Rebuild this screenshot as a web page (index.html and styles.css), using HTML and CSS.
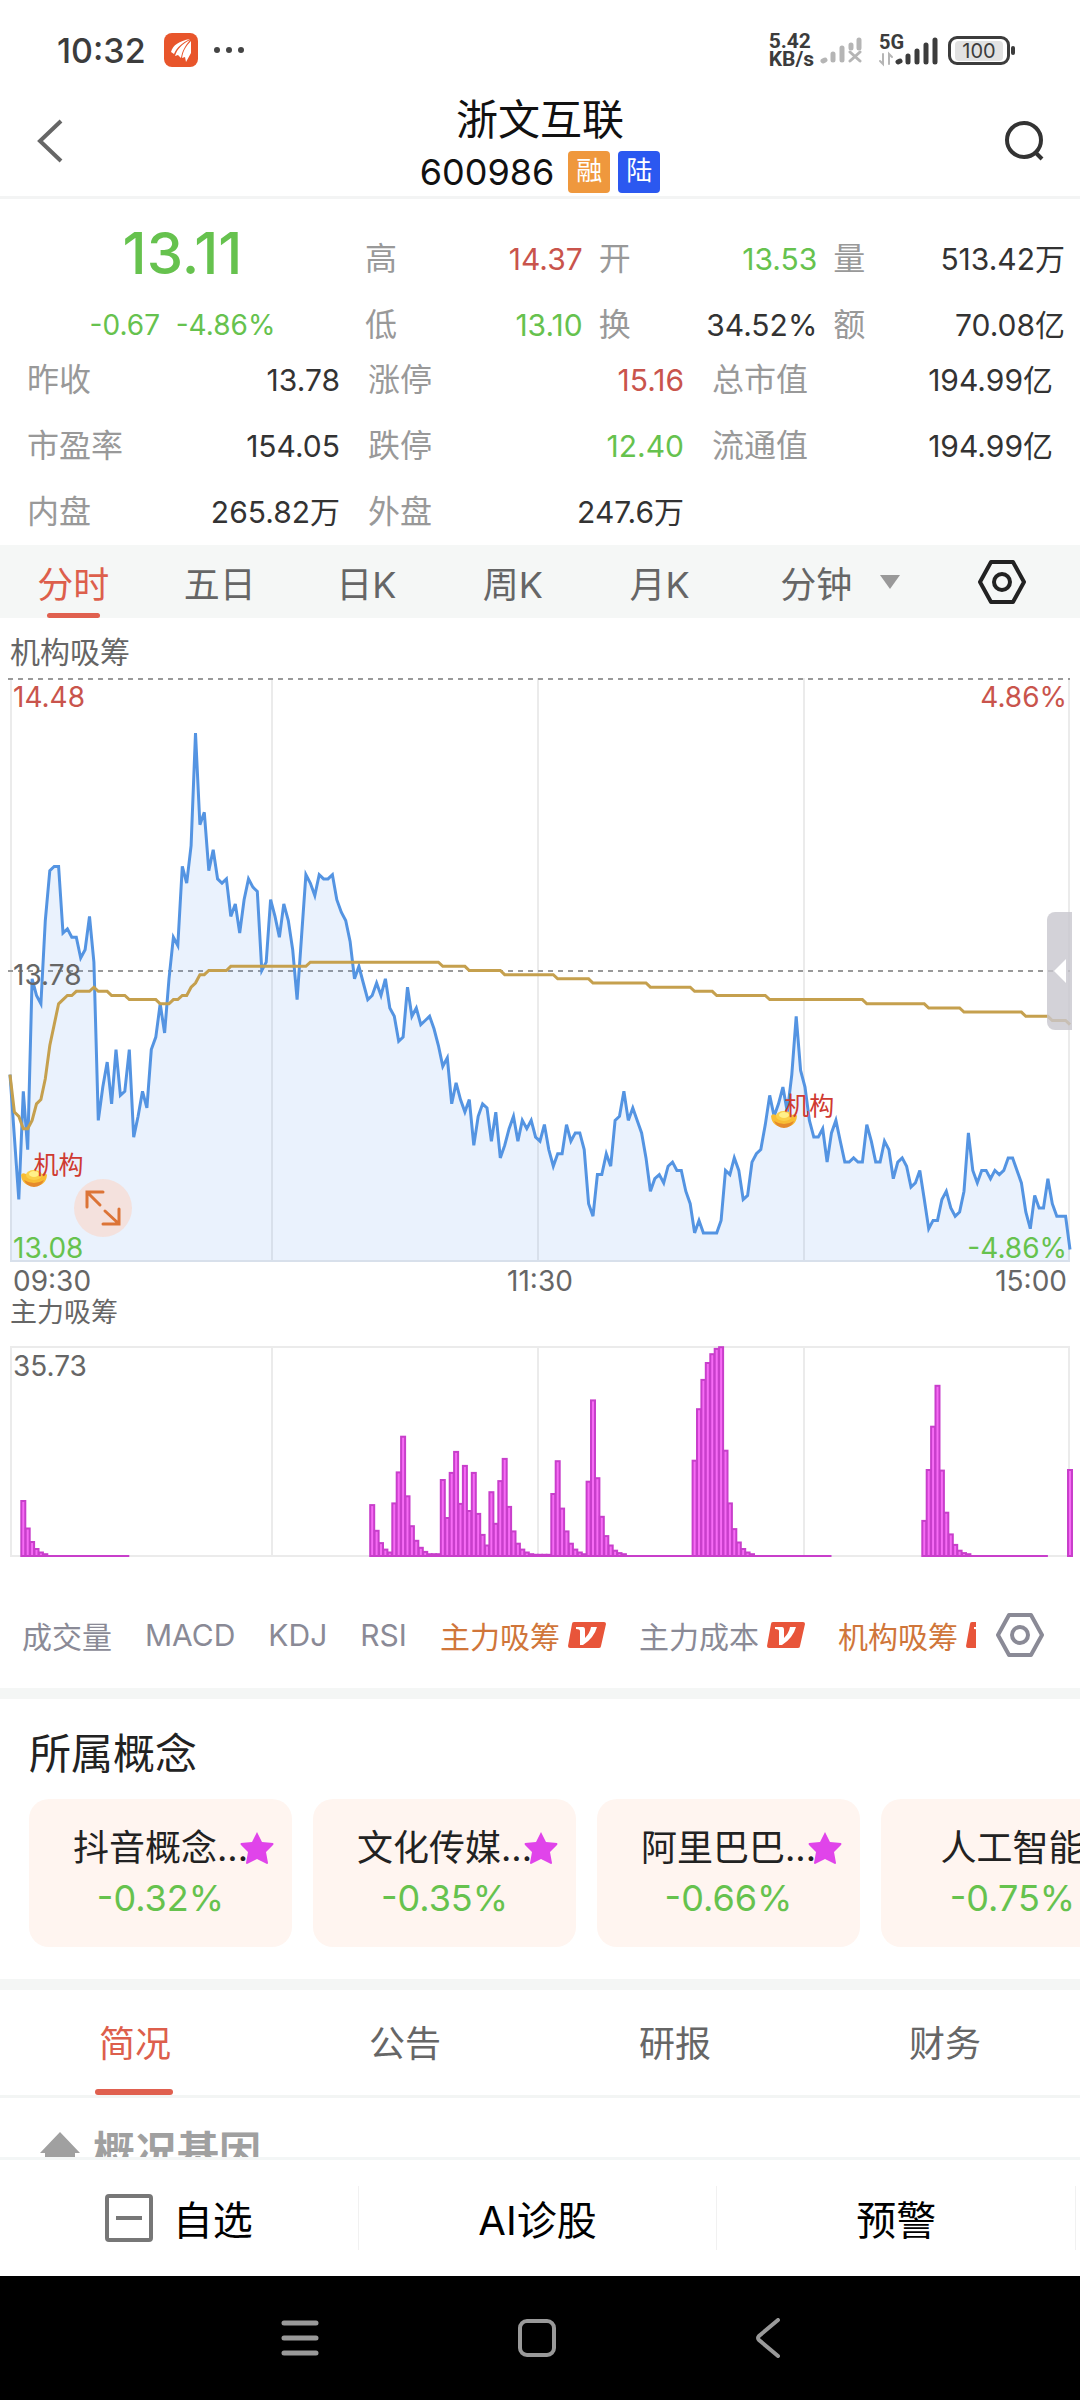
FILE: index.html
```html
<!DOCTYPE html>
<html lang="zh-CN">
<head>
    <meta charset="UTF-8">
    <meta name="viewport" content="width=device-width, initial-scale=1.0">
    <title>浙文互联 600986</title>
    <link rel="stylesheet" href="styles.css">
</head>
<body>
<div class="app">
    <!-- phone status bar -->
    <div class="status">
        <span class="clock">10:32</span>
        <svg class="app-icon" width="34" height="34" viewBox="0 0 34 34">
            <rect width="34" height="34" rx="8" fill="#e8552b"/>
            <path d="M7 19 C9 12 15 8 26 6 C18 10 13 14 10 21 Z M11 23 C13 16 18 11 26 7 C21 13 18 18 17 25 L14 22 Z M18 25 C19 18 22 13 27 8 L27 20 L22 29 L21 24 Z" fill="#fff"/>
        </svg>
        <svg class="dots" width="32" height="8" viewBox="0 0 32 8" fill="#444"><circle cx="4" cy="4" r="3"/><circle cx="16" cy="4" r="3"/><circle cx="28" cy="4" r="3"/></svg>
        <span class="spacer"></span>
        <span class="speed"><span>5.42</span><span>KB/s</span></span>
        <svg class="sim1" width="42" height="28" viewBox="0 0 42 28" stroke="#b5b5b5" stroke-width="5" stroke-linecap="round" fill="none">
            <path d="M3 25 L5 24 M13 24 V18 M22 24 V12 M31 12 V9 M39 12 V4"/>
            <path d="M30 16 L40 25 M40 16 L30 25" stroke-width="3"/>
        </svg>
        <div class="sim2">
            <span class="net">5G</span>
            <svg width="60" height="34" viewBox="0 0 60 34" stroke="#3c3c3c" stroke-width="5" stroke-linecap="round" fill="none">
                <path d="M20 29 L22 28 M30 29 V23 M39 29 V18 M48 29 V12 M57 29 V7"/>
                <path d="M5 21 V31 L2 28 M11 31 V21 L14 24" stroke="#b5b5b5" stroke-width="2"/>
            </svg>
        </div>
        <span class="battery"><span>100</span></span>
    </div>

    <header class="header">
        <button class="icon-btn" aria-label="返回"><svg width="30" height="46" viewBox="0 0 30 46"><path d="M27 3 L6 23 L27 43" fill="none" stroke="#666" stroke-width="4"/></svg></button>
        <div class="title">
            <h1>浙文互联</h1>
            <div class="code">600986 <span class="tag rong">融</span><span class="tag lu">陆</span></div>
        </div>
        <button class="icon-btn" aria-label="搜索"><svg width="42" height="42" viewBox="0 0 42 42" fill="none" stroke="#333" stroke-width="4"><circle cx="20" cy="20" r="17"/><path d="M31 32 L38 39"/></svg></button>
    </header>

    <section class="quote">
        <div class="quote-top">
            <div class="price">
                <strong>13.11</strong>
                <span>-0.67&nbsp; -4.86%</span>
            </div>
            <dl class="cells">
                <div><dt>高</dt><dd class="up">14.37</dd></div>
                <div><dt>开</dt><dd class="down">13.53</dd></div>
                <div><dt>量</dt><dd>513.42万</dd></div>
                <div><dt>低</dt><dd class="down">13.10</dd></div>
                <div><dt>换</dt><dd>34.52%</dd></div>
                <div><dt>额</dt><dd>70.08亿</dd></div>
            </dl>
        </div>
        <dl class="cells wide">
            <div><dt>昨收</dt><dd>13.78</dd></div>
            <div><dt>涨停</dt><dd class="up">15.16</dd></div>
            <div><dt>总市值</dt><dd>194.99亿</dd></div>
            <div><dt>市盈率</dt><dd>154.05</dd></div>
            <div><dt>跌停</dt><dd class="down">12.40</dd></div>
            <div><dt>流通值</dt><dd>194.99亿</dd></div>
            <div><dt>内盘</dt><dd>265.82万</dd></div>
            <div><dt>外盘</dt><dd>247.6万</dd></div>
        </dl>
    </section>

    <nav class="periods">
        <button class="active">分时</button>
        <button>五日</button>
        <button>日K</button>
        <button>周K</button>
        <button>月K</button>
        <button class="minutes">分钟 <i class="caret"></i></button>
        <button class="setting" aria-label="设置"><svg width="48" height="46" viewBox="0 0 48 46" fill="none" stroke="#222" stroke-width="4"><path d="M13 3 H35 L46 23 L35 43 H13 L2 23 Z" stroke-linejoin="round"/><circle cx="24" cy="23" r="8"/></svg></button>
    </nav>

    <section class="charts">
        <h2>机构吸筹</h2>
        <div class="plot">
            <svg id="priceChart" viewBox="0 0 1060 584" preserveAspectRatio="none"></svg>
            <span class="label top-left up">14.48</span>
            <span class="label top-right up">4.86%</span>
            <span class="label middle">13.78</span>
            <span class="label bottom-left down">13.08</span>
            <span class="label bottom-right down">-4.86%</span>
            <div class="marker first"><svg width="26" height="18" viewBox="0 0 26 18"><path d="M0 6 Q1 3 5 5 Q13 8 21 5 Q25 3 26 6 Q25 17 13 17 Q1 17 0 6 Z" fill="#f8bd35"/><path d="M3 11 Q13 17 23 11 Q20 18 13 18 Q6 18 3 11 Z" fill="#e58a2c"/><ellipse cx="13" cy="6" rx="8" ry="5" fill="#fbd04a"/><ellipse cx="13" cy="5" rx="5" ry="3" fill="#fff08a"/></svg><span>机构</span></div>
            <div class="marker second"><svg width="26" height="18" viewBox="0 0 26 18"><path d="M0 6 Q1 3 5 5 Q13 8 21 5 Q25 3 26 6 Q25 17 13 17 Q1 17 0 6 Z" fill="#f8bd35"/><path d="M3 11 Q13 17 23 11 Q20 18 13 18 Q6 18 3 11 Z" fill="#e58a2c"/><ellipse cx="13" cy="6" rx="8" ry="5" fill="#fbd04a"/><ellipse cx="13" cy="5" rx="5" ry="3" fill="#fff08a"/></svg><span>机构</span></div>
            <button class="expand" aria-label="全屏"><svg width="36" height="36" viewBox="0 0 36 36" fill="none" stroke="#dc7437" stroke-width="3" stroke-linecap="round"><path d="M2 17 V2 H18 M3 3 L15 15 M34 19 V34 H18 M33 33 L20 21"/></svg></button>
            <button class="drawer" aria-label="展开"><svg width="12" height="24" viewBox="0 0 12 24"><path d="M12 0 V24 L0 12 Z" fill="#fff"/></svg></button>
        </div>
        <div class="times"><span>09:30</span><span>11:30</span><span>15:00</span></div>
        <h3>主力吸筹</h3>
        <div class="plot sub">
            <svg id="forceChart" viewBox="0 0 1060 210" preserveAspectRatio="none"></svg>
            <span class="label top-left">35.73</span>
        </div>
    </section>

    <div class="indicators">
        <div class="scroll">
            <button>成交量</button>
            <button>MACD</button>
            <button>KDJ</button>
            <button>RSI</button>
            <button class="on">主力吸筹<svg class="vip" width="38" height="26" viewBox="0 0 38 26"><path d="M6 0 H36 Q38 0 38 2 L33 24 Q33 26 31 26 H2 Q0 26 0 24 L4 2 Q4 0 6 0 Z" fill="#e8553a"/><path d="M8 5 H15 Q17 5 17 8 L17 16 Q22 11 23 5 H29 Q26 16 15 23 H12 L12 9 Q12 7 8 7 Z" fill="#fff"/></svg></button>
            <button>主力成本<svg class="vip" width="38" height="26" viewBox="0 0 38 26"><path d="M6 0 H36 Q38 0 38 2 L33 24 Q33 26 31 26 H2 Q0 26 0 24 L4 2 Q4 0 6 0 Z" fill="#e8553a"/><path d="M8 5 H15 Q17 5 17 8 L17 16 Q22 11 23 5 H29 Q26 16 15 23 H12 L12 9 Q12 7 8 7 Z" fill="#fff"/></svg></button>
            <button class="on">机构吸筹<svg class="vip" width="38" height="26" viewBox="0 0 38 26"><path d="M6 0 H36 Q38 0 38 2 L33 24 Q33 26 31 26 H2 Q0 26 0 24 L4 2 Q4 0 6 0 Z" fill="#e8553a"/><path d="M8 5 H15 Q17 5 17 8 L17 16 Q22 11 23 5 H29 Q26 16 15 23 H12 L12 9 Q12 7 8 7 Z" fill="#fff"/></svg></button>
        </div>
        <button class="setting" aria-label="指标设置"><svg width="48" height="46" viewBox="0 0 48 46" fill="none" stroke="#8a8a96" stroke-width="4"><path d="M13 3 H35 L46 23 L35 43 H13 L2 23 Z" stroke-linejoin="round"/><circle cx="24" cy="23" r="8"/></svg></button>
    </div>

    <section class="concepts">
        <h2>所属概念</h2>
        <div class="cards">
            <a class="card" href="#"><span class="name">抖音概念...</span><span class="rate">-0.32%</span><svg class="star" viewBox="0 0 34 32"><path d="M17 0 L22 10 L33 11 Q34 12 33 13 L26 20 L28 31 Q28 32 27 32 L17 27 L7 32 Q6 32 6 31 L8 20 L1 13 Q0 12 1 11 L12 10 Z"/></svg></a>
            <a class="card" href="#"><span class="name">文化传媒...</span><span class="rate">-0.35%</span><svg class="star" viewBox="0 0 34 32"><path d="M17 0 L22 10 L33 11 Q34 12 33 13 L26 20 L28 31 Q28 32 27 32 L17 27 L7 32 Q6 32 6 31 L8 20 L1 13 Q0 12 1 11 L12 10 Z"/></svg></a>
            <a class="card" href="#"><span class="name">阿里巴巴...</span><span class="rate">-0.66%</span><svg class="star" viewBox="0 0 34 32"><path d="M17 0 L22 10 L33 11 Q34 12 33 13 L26 20 L28 31 Q28 32 27 32 L17 27 L7 32 Q6 32 6 31 L8 20 L1 13 Q0 12 1 11 L12 10 Z"/></svg></a>
            <a class="card" href="#"><span class="name">人工智能</span><span class="rate">-0.75%</span></a>
        </div>
    </section>

    <nav class="tabs">
        <button class="active">简况</button>
        <button>公告</button>
        <button>研报</button>
        <button>财务</button>
    </nav>

    <section class="profile">
        <h2><svg width="40" height="40" viewBox="0 0 40 40" fill="#a0a0a0"><path d="M20 0 L40 21 H35 V38 H25 V25 H15 V38 H5 V21 H0 Z"/></svg>概况基因</h2>
    </section>

    <div class="actions">
        <button><svg width="48" height="48" viewBox="0 0 48 48" fill="none" stroke="#777" stroke-width="4"><rect x="2" y="2" width="44" height="44" rx="2"/><path d="M11 24 H37"/></svg>自选</button>
        <button>AI诊股</button>
        <button>预警</button>
    </div>

    <div class="system-nav">
        <button aria-label="菜单"><svg width="38" height="38" viewBox="0 0 38 38" stroke="#999" stroke-width="5" stroke-linecap="round"><path d="M3 4 H35 M3 19 H35 M3 34 H35"/></svg></button>
        <button aria-label="主页"><svg width="40" height="40" viewBox="0 0 40 40" fill="none" stroke="#999" stroke-width="4"><rect x="3" y="3" width="34" height="34" rx="7"/></svg></button>
        <button aria-label="返回"><svg width="26" height="40" viewBox="0 0 26 40" fill="none" stroke="#999" stroke-width="4" stroke-linecap="round"><path d="M23 2 L4 18 Q2 20 4 22 L23 38"/></svg></button>
    </div>
</div>
<script src="chart.js"></script>
</body>
</html>
```
FILE: styles.css
```css
* { box-sizing: border-box; }
body { margin: 0; background: #fff; color: #333; font-family: Inter, "Noto Sans CJK SC", sans-serif; }
button { border: 0; padding: 0; background: none; color: inherit; font: inherit; cursor: pointer; }
h1, h2, h3, dl, dd { margin: 0; font-weight: 400; }
a { color: inherit; text-decoration: none; }
svg { display: block; flex: none; }

.app { height: 100vh; display: flex; flex-direction: column; overflow: hidden; }
.app > * { flex: none; }
.up { color: #c9544c; }
.down { color: #66c24e; }

/* status bar */
.status { display: flex; align-items: center; height: 100px; padding: 0 70px 0 57px; color: #3c3c3c; }
.clock { font-size: 34px; font-weight: 500; }
.app-icon { margin-left: 18px; }
.dots { margin-left: 15px; }
.spacer { flex: 1; }
.speed { display: grid; font-family: Roboto, sans-serif; font-size: 21px; line-height: 18px; font-weight: 700; }
.sim1 { margin-left: 6px; }
.sim2 { position: relative; margin-left: 16px; }
.net { position: absolute; left: 1px; top: -1px; font-family: Roboto, sans-serif; font-size: 20px; line-height: 20px; font-weight: 700; }
.battery { position: relative; margin-left: 10px; width: 62px; height: 29px; padding: 2px; border: 3px solid #3c3c3c; border-radius: 9px; font-size: 20px; line-height: 20px; text-align: center; }
.battery span { display: block; margin: 0 2px; background: #e2e2e2; border-radius: 4px; }
.battery::after { content: ""; position: absolute; right: -8px; top: 7px; width: 4px; height: 9px; background: #3c3c3c; border-radius: 2px; }

/* header */
.header { display: flex; justify-content: space-between; align-items: center; height: 99px; padding: 0 34px; border-bottom: 3px solid #f3f4f4; color: #111; }
.icon-btn { width: 42px; padding-bottom: 14px; }
.title { text-align: center; padding-bottom: 8px; }
.title h1 { font-size: 42px; line-height: 50px; margin-bottom: 5px; }
.code { display: flex; align-items: center; justify-content: center; font-size: 36px; line-height: 44px; }
.tag { margin-left: 8px; width: 42px; height: 42px; border-radius: 4px; color: #fff; font-size: 26px; line-height: 40px; }
.tag.rong { background: #ef983d; margin-left: 14px; }
.tag.lu { background: #2b58f0; }

/* quote */
.quote { padding: 33px 0 6px; font-size: 32px; line-height: 54px; }
.quote-top { display: grid; grid-template-columns: 365px 1fr; padding-right: 15px; }
.price { display: flex; flex-direction: column; align-items: center; color: #66c24e; }
.price strong { font-size: 58px; font-weight: 500; line-height: 42px; }
.price span { font-size: 28px; margin-top: 24px; }
.cells { display: grid; grid-template-columns: 218fr 219fr 232fr; column-gap: 16px; row-gap: 12px; }
.cells div { display: flex; justify-content: space-between; height: 54px; }
.cells dt { color: #999; }
.cells dd { font-size: 30px; }
.cells.wide { grid-template-columns: 313fr 316fr 341fr; column-gap: 28px; padding: 0 27px; margin-top: 1px; }

/* period tabs */
.periods { display: flex; height: 73px; padding-right: 24px; background: #f5f7f6; color: #666; font-size: 36px; }
.periods button { position: relative; flex: 146; }
.periods .active, .tabs .active { color: #dd5f4c; }
.periods .active::after { content: ""; position: absolute; left: 32%; right: 32%; bottom: 0; height: 5px; border-radius: 3px; background: #e0604f; }
.periods .minutes { flex: 214; display: flex; align-items: center; justify-content: center; gap: 28px; }
.periods .setting { flex: 108; display: flex; align-items: center; justify-content: center; }
.caret { border: 10px solid transparent; border-top: 14px solid #999; border-bottom: 0; }

/* charts */
.charts { padding: 8px 10px 0; color: #666; font-size: 28px; }
.charts h2 { font-size: 30px; line-height: 52px; }
.charts h3 { font-size: 27px; line-height: 26px; }
.plot { position: relative; height: 584px; }
.plot svg[id] { width: 100%; height: 100%; overflow: visible; }
.plot.sub { height: 210px; margin-top: 21px; }
.label { position: absolute; line-height: 36px; }
.top-left { left: 3px; top: 1px; }
.top-right { right: 3px; top: 1px; }
.middle { left: 3px; top: 279px; }
.bottom-left { left: 3px; bottom: -4px; }
.bottom-right { right: 3px; bottom: -4px; }
.times { display: grid; grid-template-columns: 1fr 1fr 1fr; padding: 0 3px; line-height: 38px; text-align: center; }
.times span:first-child { text-align: left; }
.times span:last-child { text-align: right; }
.marker { position: absolute; width: 26px; }
.marker span { position: absolute; left: 13px; bottom: 4px; white-space: nowrap; font-size: 25px; line-height: 36px; color: #cf3a31; }
.marker.first { left: 1%; top: 84%; }
.marker.second { left: 72%; top: 74%; margin-left: -2px; }
.expand { position: absolute; left: 6%; bottom: 25px; width: 58px; height: 58px; border-radius: 50%; background: rgba(250, 214, 200, .6); display: flex; align-items: center; justify-content: center; }
.drawer { position: absolute; right: -2px; top: 40%; width: 25px; height: 118px; border-radius: 8px 0 0 8px; background: rgba(200, 199, 206, .8); display: flex; align-items: center; justify-content: center; }

.grid { stroke: #ebebeb; stroke-width: 2; fill: none; }
.dash { stroke: #999; stroke-width: 2; stroke-dasharray: 5 5; }
.area { fill: rgba(86, 152, 240, .12); }
.line { fill: none; stroke: #5494e2; stroke-width: 3; }
.avg { fill: none; stroke: #c5a04e; stroke-width: 3; }
.bar { fill: #f76bf5; stroke: #c83fcb; stroke-width: 2; }

/* indicator switcher */
.indicators { display: flex; align-items: center; justify-content: space-between; height: 131px; padding: 24px 36px 0 22px; color: #8a8a96; font-size: 30px; }
.scroll { display: flex; gap: 33px; width: 954px; overflow: hidden; }
.scroll button { display: flex; align-items: center; white-space: nowrap; flex: none; }
.scroll .on { color: #d0763a; }
.vip { margin-left: 8px; }

/* concepts */
.concepts { border-top: 11px solid #f4f6f5; border-bottom: 11px solid #f4f6f5; padding: 28px 0 32px 29px; color: #222; }
.concepts h2 { font-size: 42px; line-height: 54px; }
.cards { display: flex; gap: 21px; margin-top: 18px; overflow: hidden; }
.card { position: relative; flex: none; width: 263px; height: 148px; padding-top: 24px; border-radius: 20px; background: #fff5f0; text-align: center; }
.name { display: block; font-size: 36px; line-height: 50px; }
.rate { display: block; font-size: 36px; line-height: 50px; color: #66c24e; }
.star { position: absolute; right: 18px; top: 33px; width: 34px; height: 32px; fill: #e044ea; }

/* bottom part */
.tabs { display: flex; height: 108px; border-bottom: 3px solid #f3f5f4; color: #666; font-size: 36px; }
.tabs button { position: relative; flex: 1; padding-bottom: 4px; }
.tabs .active::after { content: ""; position: absolute; left: 35%; right: 36%; bottom: 0; height: 6px; border-radius: 3px; background: #e0604f; }
.app .profile { flex: 1 1 0; min-height: 0; overflow: hidden; padding: 26px 40px 0; }
.profile h2 { display: flex; align-items: center; gap: 13px; font-size: 42px; line-height: 56px; font-weight: 700; color: #a0a0a0; }
.actions { display: flex; align-items: center; height: 119px; padding-right: 4px; border-top: 3px solid #f3f6f6; color: #000; font-size: 40px; }
.actions button { flex: 1; height: 64px; display: flex; align-items: center; justify-content: center; gap: 20px; border-right: 1px solid #f1f1f1; }
.system-nav { display: flex; align-items: center; justify-content: center; gap: 198px; height: 124px; padding-right: 18px; background: #000; }
```
FILE: chart.js
```js
// price per minute in cents, 09:30 to 15:00
const prices = [
    1353,1338,1323,1349,1335,1376,1372,1370,1390,1402,1403,1403,1387,1388,1386,1386,1381,1383,1391,1380,
    1342,1350,1356,1346,1359,1348,1349,1359,1338,1343,1349,1345,1359,1362,1370,1363,1376,1386,1384,1403,
    1399,1408,1435,1413,1416,1402,1407,1400,1399,1400,1391,1394,1387,1395,1400,1398,1397,1378,1380,1395,
    1391,1386,1394,1390,1383,1371,1386,1401,1399,1396,1401,1400,1400,1401,1395,1392,1390,1385,1376,1379,
    1375,1371,1372,1375,1372,1376,1369,1367,1361,1362,1374,1367,1369,1365,1366,1367,1364,1360,1355,1357,
    1346,1351,1347,1344,1347,1336,1343,1346,1345,1337,1344,1333,1336,1340,1343,1337,1342,1340,1342,1338,
    1337,1341,1335,1331,1334,1334,1341,1337,1339,1339,1335,1322,1319,1329,1329,1334,1331,1342,1343,1349,
    1342,1345,1342,1339,1333,1325,1328,1329,1327,1331,1332,1330,1330,1325,1322,1315,1318,1315,1315,1315,
    1315,1318,1330,1329,1333,1330,1323,1324,1332,1334,1335,1341,1348,1343,1346,1350,1344,1353,1367,1354,
    1350,1342,1338,1338,1340,1332,1339,1342,1337,1332,1332,1333,1332,1332,1341,1337,1332,1332,1337,1335,
    1328,1332,1333,1331,1326,1327,1330,1323,1316,1318,1318,1323,1325,1321,1319,1320,1325,1339,1330,1327,
    1330,1330,1328,1330,1329,1330,1333,1333,1330,1327,1320,1316,1324,1321,1321,1328,1322,1319,1319,1319,
    1311
]

// average price as [cents, first minute, last minute]
const average = [
    [1353,0,0],[1344,1,1],[1343,2,2],[1340,3,4],[1342,5,5],[1346,6,6],[1347,7,7],[1352,8,8],[1360,9,9],
    [1365,10,10],[1370,11,11],[1371,12,12],[1372,13,14],[1373,15,18],[1374,19,19],[1373,20,22],[1372,23,26],
    [1371,27,33],[1370,34,36],[1371,37,38],[1372,39,40],[1374,41,41],[1375,42,42],[1377,43,44],[1378,45,49],
    [1379,50,67],[1380,68,97],[1379,98,103],[1378,104,111],[1377,112,123],[1376,124,131],[1375,132,144],
    [1374,145,154],[1373,155,159],[1372,160,171],[1371,172,193],[1370,194,207],[1369,208,215],
    [1368,216,229],[1367,230,235],[1366,236,239],[1365,240,240]
]

// groups of bars: first minute -> values
const force = {
    3: [9.4,4.7,2.4,1.2,.6,.3],
    82: [8.7,4.3,2.2,1.1,.6,9,14.3,20.4,10.2,5.1,2.6,1.4,.7,.3,.3,.3,13,6.5,14.2,17.8,8.9,15.4,7.7,14.2,7.2,3.6,1.8,
        10.9,5.5,12.8,16.6,8.4,4.2,2.1,1.1,.6,.3,.2,.2,.2,.2],
    123: [10.6,16.2,8.1,4.2,2.1,1.1,.6,.3,12.7,26.6,13.3,6.7,3.4,1.8,.9,.5,.3],
    155: [16.3,25.1,30.1,33,34.5,35.4,35.7,18,9,4.6,2.3,1.2,.6,.3],
    207: [6,14.7,22.1,29.1,14.6,7.4,3.7,1.9,.9,.5,.3],
    240: [14.7]
}
// flat remains after a group, drawn as a thin line
const tails = [[8,27],[139,155],[168,186],[217,235]]

const x = i => (i * 1060 / 240).toFixed(1)
const y = p => (1 + (1448 - p) * 583 / 140).toFixed(1)

function gridLines(h) {
    let d = ''
    for (const gx of [1, 262, 528, 794, 1059]) d += `M${gx} 0V${h}`
    return `<path class="grid" d="${d}M0 ${h - 1}H1060"/>`
}

function drawPrice() {
    const line = prices.map((p, i) => x(i) + ',' + y(p)).join(' ')
    const avg = average.map(a => `${x(a[1])},${y(a[0])} ${x(a[2])},${y(a[0])}`).join(' ')
    document.getElementById('priceChart').innerHTML = gridLines(584) +
        `<path class="dash" d="M-2 1H1060M-2 293H1060"/>` +
        `<polygon class="area" points="0,584 ${line} 1060,584"/>` +
        `<polyline class="line" points="${line}"/>` +
        `<polyline class="avg" points="${avg}"/>`
}

function drawForce() {
    let html = gridLines(210) + '<path class="grid" d="M0 0H1060"/>'
    for (const start in force) {
        force[start].forEach((v, n) => {
            const h = v * 209 / 35.73
            html += `<rect class="bar" x="${(x(+start + n) - 2).toFixed(1)}" y="${(209 - h).toFixed(1)}" width="4" height="${h.toFixed(1)}"/>`
        })
    }
    for (const t of tails) html += `<path class="bar" d="M${x(t[0])} 209H${x(t[1])}"/>`
    document.getElementById('forceChart').innerHTML = html
}

drawPrice()
drawForce()
```
